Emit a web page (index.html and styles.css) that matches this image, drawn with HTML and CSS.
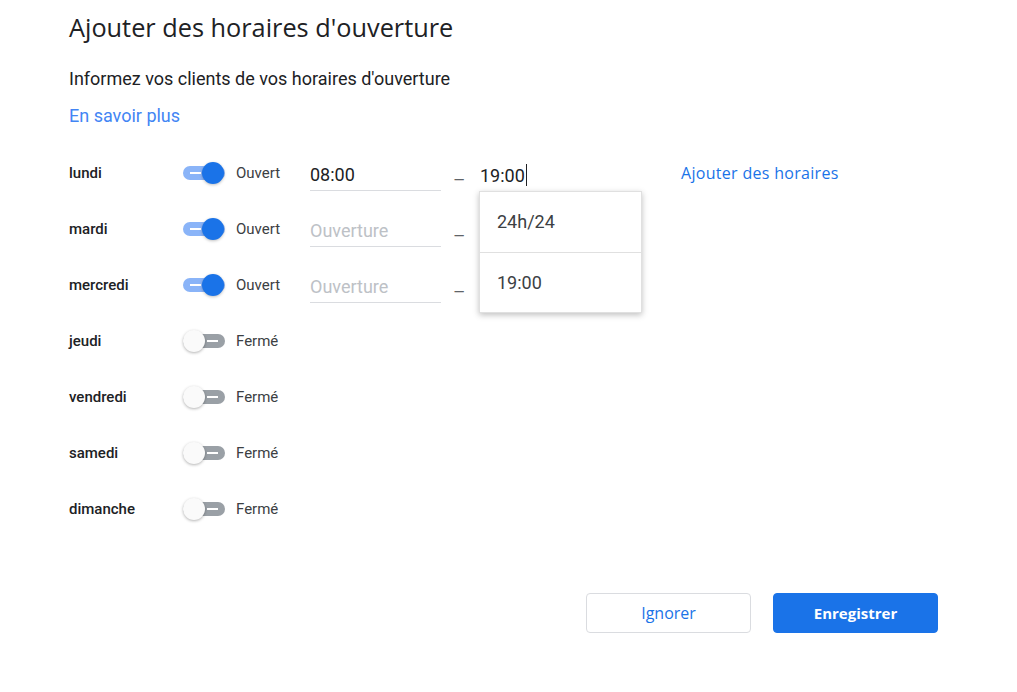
FILE: index.html
```html
<!DOCTYPE html>
<html lang="fr">
<head>
<meta charset="utf-8">
<title>Ajouter des horaires d'ouverture</title>
<link rel="stylesheet" href="styles.css">
</head>
<body>
<div class="page">
  <h1 class="title">Ajouter des horaires d'ouverture</h1>
  <p class="subtitle">Informez vos clients de vos horaires d'ouverture</p>
  <a class="learn" href="#">En savoir plus</a>

  <div class="days">
    <div class="row">
      <span class="day">lundi</span>
      <span class="toggle on"><span class="bar"></span><span class="thumb"></span></span>
      <span class="status">Ouvert</span>
      <span class="field"><span class="value">08:00</span></span>
      <span class="dash">–</span>
      <span class="field second focused"><span class="value">19:00</span><span class="caret"></span>
        <div class="menu">
          <div class="menu-item">24h/24</div>
          <div class="menu-item">19:00</div>
        </div>
      </span>
      <a class="add" href="#">Ajouter des horaires</a>
    </div>
    <div class="row">
      <span class="day">mardi</span>
      <span class="toggle on"><span class="bar"></span><span class="thumb"></span></span>
      <span class="status">Ouvert</span>
      <span class="field"><span class="placeholder">Ouverture</span></span>
      <span class="dash">–</span>
    </div>
    <div class="row">
      <span class="day">mercredi</span>
      <span class="toggle on"><span class="bar"></span><span class="thumb"></span></span>
      <span class="status">Ouvert</span>
      <span class="field"><span class="placeholder">Ouverture</span></span>
      <span class="dash">–</span>
    </div>
    <div class="row">
      <span class="day">jeudi</span>
      <span class="toggle"><span class="bar"></span><span class="thumb"></span></span>
      <span class="status">Fermé</span>
    </div>
    <div class="row">
      <span class="day">vendredi</span>
      <span class="toggle"><span class="bar"></span><span class="thumb"></span></span>
      <span class="status">Fermé</span>
    </div>
    <div class="row">
      <span class="day">samedi</span>
      <span class="toggle"><span class="bar"></span><span class="thumb"></span></span>
      <span class="status">Fermé</span>
    </div>
    <div class="row">
      <span class="day">dimanche</span>
      <span class="toggle"><span class="bar"></span><span class="thumb"></span></span>
      <span class="status">Fermé</span>
    </div>
  </div>

  <div class="actions">
    <button class="btn ghost">Ignorer</button>
    <button class="btn primary">Enregistrer</button>
  </div>
</div>
</body>
</html>
```

FILE: styles.css
```css
* { box-sizing: border-box; }
html, body { margin: 0; padding: 0; background: #fff; }
body {
  font-family: Roboto, "Liberation Sans", Arial, sans-serif;
  color: #202124;
  width: 1017px;
  height: 692px;
  overflow: hidden;
}
.page {
  padding: 11px 79px 0 69px;
}
.title {
  margin: 0;
  font-family: "Open Sans", Roboto, sans-serif;
  font-weight: 400;
  font-size: 25.3px;
  line-height: 32px;
  color: #202124;
}
.subtitle {
  margin: 24px 0 0;
  font-size: 18px;
  line-height: 24px;
  color: #202124;
}
.learn {
  display: block;
  margin-top: 13px;
  font-size: 18px;
  line-height: 24px;
  color: #4285f4;
  text-decoration: none;
  width: max-content;
}
.days {
  margin-top: 17px;
}
.row {
  display: flex;
  align-items: center;
  height: 56px;
}
.day {
  width: 114px;
  font-size: 15px;
  font-weight: 500;
  color: #202124;
}
.toggle {
  position: relative;
  width: 42px;
  height: 24px;
  flex: none;
}
.toggle .bar {
  position: absolute;
  left: 0;
  top: 5px;
  width: 42px;
  height: 14px;
  border-radius: 7px;
  background: #9aa0a6;
}
.toggle .bar::after {
  content: "";
  position: absolute;
  top: 6px;
  left: 24px;
  width: 11px;
  height: 2px;
  background: #fff;
}
.toggle .thumb {
  position: absolute;
  top: 1px;
  left: 0;
  width: 22px;
  height: 22px;
  border-radius: 50%;
  background: #fafafa;
  box-shadow: 0 1px 3px rgba(0,0,0,0.3);
}
.toggle.on .bar { background: #8ab4f8; }
.toggle.on .bar::after { left: 7px; }
.toggle.on .thumb {
  left: 19px;
  background: #1a73e8;
  box-shadow: 0 1px 3px rgba(0,0,0,0.25);
}
.status {
  width: 85px;
  padding-left: 11px;
  font-size: 15px;
  color: #3c4043;
}
.field {
  position: relative;
  width: 131px;
  height: 32px;
  display: flex;
  align-items: center;
  border-bottom: 1px solid #dadce0;
  font-size: 18px;
  margin-top: 4px;
}
.field .value { color: #202124; }
.field .placeholder { color: #bdc1c6; }
.dash {
  width: 38px;
  padding-left: 12px;
  padding-top: 13px;
  font-size: 19px;
  color: #5f6368;
}
.field.second {
  width: 163px;
  border-bottom: none;
  padding-left: 1px;
}
.caret {
  display: inline-block;
  width: 1px;
  height: 22px;
  background: #202124;
  margin-left: 1px;
}
.menu {
  position: absolute;
  top: 32px;
  left: 0;
  width: 163px;
  background: #fff;
  border: 1px solid #e0e0e0;
  box-shadow: 0 2px 6px rgba(0,0,0,0.25);
  z-index: 5;
}
.menu-item {
  height: 60px;
  line-height: 60px;
  padding-left: 17px;
  font-size: 18px;
  color: #3c4043;
}
.menu-item + .menu-item { border-top: 1px solid #e0e0e0; }
.add {
  margin-left: 39px;
  font-family: "Open Sans", Roboto, sans-serif;
  font-size: 16px;
  font-weight: 500;
  letter-spacing: 0.3px;
  color: #1a73e8;
  text-decoration: none;
}
.actions {
  display: flex;
  justify-content: flex-end;
  gap: 22px;
  margin-top: 56px;
}
.btn {
  width: 165px;
  height: 40px;
  border-radius: 4px;
  font-family: "Open Sans", Roboto, sans-serif;
  font-size: 16px;
  font-weight: 500;
  cursor: pointer;
}
.btn.ghost {
  background: #fff;
  border: 1px solid #dadce0;
  color: #1a73e8;
}
.btn.primary {
  background: #1a73e8;
  border: 1px solid #1a73e8;
  color: #fff;
  font-size: 15px;
  font-weight: 700;
}
```
